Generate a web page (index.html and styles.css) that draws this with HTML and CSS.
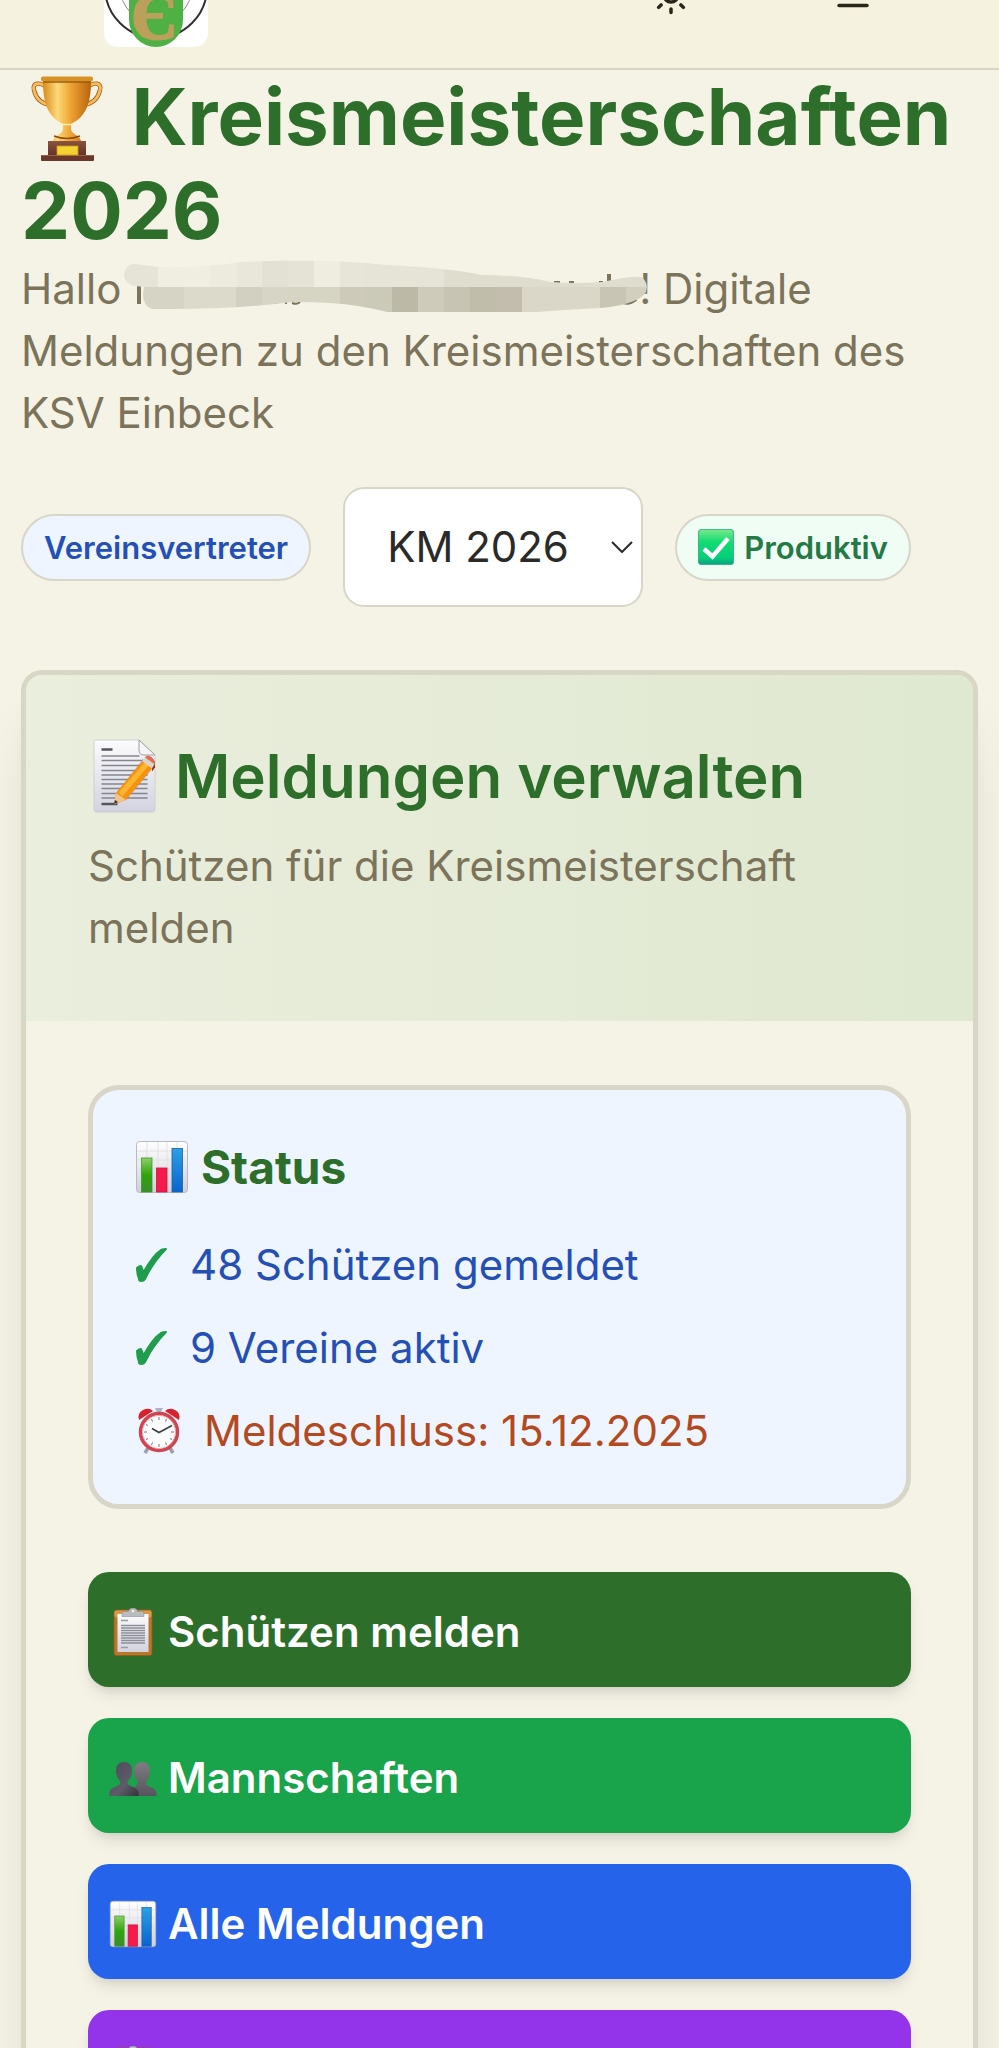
FILE: index.html
```html
<!DOCTYPE html>
<html lang="de">
<head>
<meta charset="utf-8">
<meta name="viewport" content="width=device-width, initial-scale=1">
<title>Kreismeisterschaften 2026</title>
<link rel="stylesheet" href="styles.css">
</head>
<body>
<svg class="defs" aria-hidden="true">
  <defs>
    <linearGradient id="gold" x1="0" x2="1" y1="0" y2="0">
      <stop offset="0" stop-color="#d98a1c"/><stop offset=".3" stop-color="#fdd978"/><stop offset=".55" stop-color="#f0a838"/><stop offset="1" stop-color="#b9620a"/>
    </linearGradient>
    <linearGradient id="wood" x1="0" x2="0" y1="0" y2="1">
      <stop offset="0" stop-color="#8a5440"/><stop offset="1" stop-color="#5f2f22"/>
    </linearGradient>
    <linearGradient id="paper" x1="0" x2="0" y1="0" y2="1">
      <stop offset="0" stop-color="#fbfbfc"/><stop offset="1" stop-color="#d3d3e0"/>
    </linearGradient>
    <linearGradient id="panel" x1="0" x2="0" y1="0" y2="1">
      <stop offset="0" stop-color="#ffffff"/><stop offset="1" stop-color="#cfcfda"/>
    </linearGradient>
    <linearGradient id="bar-green" x1="0" x2="0" y1="0" y2="1">
      <stop offset="0" stop-color="#8fce6a"/><stop offset=".5" stop-color="#2fa50c"/><stop offset="1" stop-color="#3a8c2c"/>
    </linearGradient>
    <linearGradient id="bar-blue" x1="0" x2="0" y1="0" y2="1">
      <stop offset="0" stop-color="#2ba0e6"/><stop offset="1" stop-color="#0a63cf"/>
    </linearGradient>
    <linearGradient id="tick-green" x1="0" x2="0" y1="0" y2="1">
      <stop offset="0" stop-color="#7be88c"/><stop offset=".35" stop-color="#12dc72"/><stop offset=".8" stop-color="#05cf78"/><stop offset="1" stop-color="#0ba183"/>
    </linearGradient>
    <linearGradient id="person" x1="0" x2="1" y1="0" y2="1">
      <stop offset="0" stop-color="#4b4a56"/><stop offset=".6" stop-color="#5c5b68"/><stop offset="1" stop-color="#34333c"/>
    </linearGradient>
    <linearGradient id="person-back" x1="0" x2="0" y1="0" y2="1">
      <stop offset="0" stop-color="#7f7d80"/><stop offset="1" stop-color="#55545c"/>
    </linearGradient>
    <symbol id="chart" viewBox="0 0 54 54">
      <rect x="1.5" y="1.5" width="51" height="51" rx="3" fill="url(#panel)" stroke="#b9b9c2"/>
      <path d="M2 11h50M2 20h50M2 29h50M12 2v50M23 2v50M32 2v50M42 2v50" stroke="#dcdce2" stroke-width=".7"/>
      <rect x="6.5" y="18" width="10.5" height="34" fill="url(#bar-green)" stroke="#3c9a27" stroke-width=".8"/>
      <rect x="21.500" y="28" width="10.500" height="24" fill="#f5194c" stroke="#c4163c" stroke-width=".8"/>
      <rect x="37" y="8.500" width="10.500" height="43.500" fill="url(#bar-blue)" stroke="#1a5fa8" stroke-width=".8"/>
    </symbol>
    <symbol id="clipboard" viewBox="0 0 48 48">
      <rect x="5" y="2" width="38" height="45.500" rx="2.500" fill="#b8782c" stroke="#94591a" stroke-width=".8"/>
      <rect x="5.500" y="2.500" width="37" height="7" rx="2" fill="#d79a48"/>
      <rect x="8.500" y="6" width="31" height="38" fill="url(#paper)"/>
      <path d="M12 12.500h7M12 39.500h7" stroke="#9a9aa4" stroke-width="1.500"/>
      <path d="M12 17.500h24M12 20h24M12 22.500h24M12 25h24M12 27.500h24M12 30h24M12 32.500h24M12 35h24" stroke="#8f8f9a" stroke-width="1.400"/>
      <path d="M13 8.500V5.500q0-2 2-2h4.500q.5-3.500 4.500-3.500t4.500 3.500H33q2 0 2 2v3z" fill="#b9bcc0" stroke="#8b8e92" stroke-width=".6"/>
      <circle cx="24" cy="3" r="1.300" fill="#f2efe2"/>
    </symbol>
  </defs>
</svg>

<header class="topbar">
  <a class="brand" href="#" aria-label="Startseite">
    <svg class="logo" viewBox="0 0 104 104">
      <rect width="104" height="104" rx="14" fill="#fff"/>
      <circle cx="52" cy="44" r="51" fill="none" stroke="#303030" stroke-width="2"/>
      <circle cx="52" cy="44" r="36" fill="none" stroke="#8a8a8a" stroke-width="1"/>
      <path d="M25 10h54v67a27 27 0 0 1-54 0z" fill="#4fb043"/>
      <text class="logo-letter" x="50" y="96" text-anchor="middle">Є</text>
    </svg>
  </a>
  <div class="tools">
    <button class="tool" type="button" aria-label="Farbschema">
      <svg class="tool-icon" viewBox="0 0 24 24"><circle cx="12" cy="12" r="4"/><path d="M12 2v2M12 20v2M4.930 4.930l1.410 1.410M17.660 17.660l1.410 1.410M2 12h2M20 12h2M6.340 17.660l-1.410 1.410M19.070 4.930l-1.410 1.410"/></svg>
    </button>
    <button class="tool" type="button" aria-label="Menü">
      <svg class="tool-icon" viewBox="0 0 24 24"><path d="M4 6h16M4 12h16M4 18h16"/></svg>
    </button>
  </div>
</header>

<main class="page">
  <h1 class="title"><svg class="title-icon" viewBox="-2 0 92 88" aria-hidden="true">
      <path d="M25 13C16 6 9 8 11 15c2 9 8 14 17 15M63 13c9-7 16-5 14 2-2 9-8 14-17 15" fill="none" stroke="#a8651a" stroke-width="4.500"/>
      <path d="M25 13C16 6 9 8 11 15c2 9 8 14 17 15M63 13c9-7 16-5 14 2-2 9-8 14-17 15" fill="none" stroke="#f4bd62" stroke-width="2.800"/>
      <path d="M20 6c0 22 5 36 20 43v5c0 5-9 6-10 12h28c-1-6-10-7-10-12v-5c15-7 20-21 20-43z" fill="url(#gold)"/>
      <rect x="18" y="1.500" width="52" height="5" rx="2" fill="#d99324"/>
      <path d="M20 7h48" stroke="#9b5c10" stroke-width="1.500"/>
      <path d="M38 49.500h12" stroke="#fff0b8" stroke-width="1.500"/>
      <path d="M31 61q13 5 26 0" fill="none" stroke="#8d4c0e" stroke-width="1.500"/>
      <rect x="25" y="66" width="38" height="16" fill="url(#wood)"/>
      <rect x="18" y="80" width="53" height="6" rx="1" fill="#6b3728"/>
      <path d="M18 80.500h53" stroke="#97604b"/>
      <rect x="34" y="71" width="21" height="9" fill="#f5d22f" stroke="#c49a1c" stroke-width=".8"/>
    </svg> Kreismeisterschaften 2026</h1>
  <p class="lead">Hallo <span class="redacted"><svg class="smear" viewBox="131 262 506 62" aria-hidden="true">
      <g fill="none" stroke="#7b735a" stroke-width="4">
        <path d="M137 304V286"/>
        <path d="M264 303h3M272 303h3M284 302v2M290 303q5 2 8-1" stroke-width="2"/>
        <path d="M552 282h6M567 282h5M597 282h4" stroke-width="2"/>
        <path d="M607 274v12"/>
        <path d="M618 300q7 6 16-1"/>
      </g>
      <clipPath id="smear-shape"><path d="M122 276q1-13 12-12l22 3q45 1 84-5 80-4 145 3 62 3 95 10 40 0 68 7 28 2 52 0 28-6 39-5 8 5 5 15-7 12-45 16-40 2-64 4H385q-40-11-95-10-60 8-140 7-9-3-9-15l1-7-9-1q-10-2-11-10z"/></clipPath>
      <g clip-path="url(#smear-shape)">
        <path d="M120 255h36v33h-36z" fill="#e6e4d7"/><path d="M156 255h52v33h-52z" fill="#f0eee1"/>
        <path d="M208 255h27v33h-27z" fill="#edebdd"/><path d="M235 255h25v33h-25z" fill="#e9e7d9"/>
        <path d="M260 255h26v33h-26z" fill="#e3e1d3"/><path d="M286 255h26v33h-26z" fill="#e5e3d6"/>
        <path d="M312 255h26v33h-26z" fill="#efede0"/><path d="M338 255h26v33h-26z" fill="#e7e5d8"/>
        <path d="M364 255h78v33h-78z" fill="#e5e4d6"/><path d="M442 255h78v33h-78z" fill="#dfdece"/>
        <path d="M520 255h130v33h-130z" fill="#dfddcd"/>
        <path d="M138 287h44v28h-44z" fill="#d6d4c4"/><path d="M182 287h52v28h-52z" fill="#dcdacb"/>
        <path d="M234 287h26v28h-26z" fill="#d2d0c0"/><path d="M260 287h26v28h-26z" fill="#d7d5c6"/>
        <path d="M286 287h52v28h-52z" fill="#d6d4c3"/><path d="M338 287h26v28h-26z" fill="#cdcab9"/>
        <path d="M364 287h26v28h-26z" fill="#cbc9b8"/><path d="M390 287h26v28h-26z" fill="#bdb9a7"/>
        <path d="M416 287h26v28h-26z" fill="#cecbbb"/><path d="M442 287h26v28h-26z" fill="#c7c4b3"/>
        <path d="M468 287h26v28h-26z" fill="#c1bdab"/><path d="M494 287h26v28h-26z" fill="#c3bdad"/>
        <path d="M520 287h78v28h-78z" fill="#dad7c8"/><path d="M598 287h26v28h-26z" fill="#c9c5b4"/>
        <path d="M624 287h26v28h-26z" fill="#d2cfbf"/>
      </g>
    </svg></span>! Digitale Meldungen zu den Kreismeisterschaften des KSV Einbeck</p>

  <div class="filters">
    <span class="badge badge-role">Vereinsvertreter</span>
    <span class="picker">
      <select class="picker-select" aria-label="Wettbewerb"><option>KM 2026</option></select>
      <svg class="picker-arrow" viewBox="0 0 22 12" aria-hidden="true"><path d="M1 1l10 10L21 1"/></svg>
    </span>
    <span class="badge badge-live"><svg class="badge-icon" viewBox="0 0 36 36" aria-hidden="true">
      <rect x=".5" y=".5" width="35" height="35" rx="2.500" fill="url(#tick-green)" stroke="#28a884" stroke-width=".8"/>
      <path d="M6 20l8.500 7.500L30 9.500" fill="none" stroke="#fff" stroke-width="4.500"/>
    </svg>Produktiv</span>
  </div>

  <section class="card">
    <div class="card-head">
      <h2 class="card-title"><svg class="card-icon" viewBox="0 0 70 74" aria-hidden="true">
        <path d="M8 1h43l16 15v55q0 2-2 2H8q-2 0-2-2V3q0-2 2-2z" fill="url(#paper)" stroke="#c9c9d4" stroke-width=".8"/>
        <path d="M51 1v10q0 5 5 5h11z" fill="#f5f5f7" stroke="#9c9ca6"/>
        <path d="M13.500 10.500h11M13.500 65h16" stroke="#55555c" stroke-width="2.500"/>
        <path d="M13.500 17h38M13.500 21.500h46M13.500 26.500h46M13.500 31.500h46M13.500 36h46M13.500 40.500h46M13.500 45h46M13.500 49.500h46M13.500 54.500h46M13.500 59h46" stroke="#85858f" stroke-width="1.400"/>
        <path d="M26 66l3-13L55 20l11 8-27 32z" fill="#8b6a45" opacity=".35"/>
        <path d="M26 65l2-11 28-34 10 7-28 34z" fill="#f5920f"/>
        <path d="M31 53l27-31 4 3-28 33z" fill="#ffb52e"/>
        <path d="M26 65l2-11 10 7z" fill="#f0c48c"/><path d="M26 65l1-4 3 2z" fill="#333"/>
        <path d="M54 22l3-3.500 10 7-3 4z" fill="#d9d3cd"/>
        <path d="M57 18.500l2-2q5 0 8 6v3z" fill="#e46b50"/>
        <path d="M64 29.500l3-5v4l-3 4z" fill="#9e2b1d"/>
      </svg>Meldungen verwalten</h2>
      <p class="card-text">Schützen für die Kreismeisterschaft melden</p>
    </div>
    <div class="card-body">
      <section class="status">
        <h3 class="status-title"><svg class="status-icon" aria-hidden="true"><use href="#chart"/></svg>Status</h3>
        <ul class="status-list">
          <li class="status-item"><svg class="tick" viewBox="0 0 34 36" aria-hidden="true"><path d="M2 21q2-2 4-2 2 4 2 7Q18 8 26 3q2-1 5-1Q18 15 10 32q-1 2-4 2-2 0-2-2Q2 27 2 21z"/></svg>48 Schützen gemeldet</li>
          <li class="status-item"><svg class="tick" viewBox="0 0 34 36" aria-hidden="true"><path d="M2 21q2-2 4-2 2 4 2 7Q18 8 26 3q2-1 5-1Q18 15 10 32q-1 2-4 2-2 0-2-2Q2 27 2 21z"/></svg>9 Vereine aktiv</li>
          <li class="status-item status-due"><svg class="clock" viewBox="0 0 48 48" aria-hidden="true">
            <path d="M13 41l-3 5M35 41l3 5" stroke="#9ba0a8" stroke-width="3.500"/>
            <path d="M20 1h8l-2 4h-4z" fill="#aeb4bb"/>
            <path d="M4 13Q2 6 8 3q6-3 10 1z" fill="#d6232f"/><path d="M44 13q2-7-4-10-6-3-10 1z" fill="#d6232f"/>
            <circle cx="24" cy="25" r="18.500" fill="#fcfcfe" stroke="#cf4450" stroke-width="3.500"/>
            <circle cx="24" cy="25" r="16.500" fill="none" stroke="#e9a7a9"/>
            <path d="M24 10v3M24 37v3M9 25h3M36 25h3M16.500 12l1 2.500M31.500 12l-1 2.500M16.500 38l1-2.500M31.500 38l-1-2.500M11 17.500l2 1M37 32.500l-2-1M11 32.500l2-1" stroke="#77777f"/>
            <path d="M17 21.500l7 4 13-7" fill="none" stroke="#3c3f44" stroke-width="1.600"/>
          </svg>Meldeschluss: 15.12.2025</li>
        </ul>
      </section>
      <nav class="actions" aria-label="Meldungen">
        <button class="action action-dark" type="button"><svg class="action-icon" aria-hidden="true"><use href="#clipboard"/></svg>Schützen melden</button>
        <button class="action action-green" type="button"><svg class="action-icon" viewBox="0 0 48 48" aria-hidden="true">
          <path d="M24 42V35q4-3 5-7-4-4-4-11 0-9 8-9t8 9q0 7-4 11 0 3 2 4 8 2 8.500 7v3z" fill="url(#person-back)"/>
          <path d="M.5 42v-3q0-5 9-7.500 2-1 2-4-4.500-4-4.500-11Q7 8 15 8t8 8.500q0 7-4.500 11 0 3 2 4 9 2.500 9 7.500v3z" fill="url(#person)"/>
        </svg>Mannschaften</button>
        <button class="action action-blue" type="button"><svg class="action-icon" aria-hidden="true"><use href="#chart"/></svg>Alle Meldungen</button>
        <button class="action action-purple" type="button" aria-label="Weitere Aktion"><svg class="action-icon" aria-hidden="true"><use href="#clipboard"/></svg></button>
      </nav>
    </div>
  </section>
</main>
</body>
</html>
```
FILE: styles.css
```css
* {
  box-sizing: border-box;
}

body {
  margin: 0;
  height: 100vh;
  overflow: hidden;
  background: #f5f3e6;
  color: #7b735a;
  font-family: Inter, "Liberation Sans", sans-serif;
  font-size: 42px;
  font-weight: 440;
  line-height: 62px;
}

h1, h2, h3, p, ul {
  margin: 0;
  padding: 0;
}

svg {
  display: block;
  flex: none;
}

.defs {
  position: absolute;
  width: 0;
  height: 0;
}

/* The bar is scrolled partly out of view. */
.topbar {
  display: flex;
  align-items: center;
  justify-content: space-between;
  margin-top: -80px;
  padding: 23px 104px 21px;
  border-bottom: 2px solid #d8d6c4;
  background: #f5f3df;
}

.logo {
  width: 104px;
  height: 104px;
}

.logo-letter {
  font-family: "Liberation Serif", serif;
  font-size: 68px;
  font-weight: 700;
  fill: #bba05c;
  stroke: #bba05c;
  stroke-width: 2px;
}

.tools {
  display: flex;
  gap: 98px;
}

.tool {
  padding: 21px;
  border: 0;
  background: none;
}

.tool-icon {
  width: 42px;
  height: 42px;
  fill: none;
  stroke: #2b2619;
  stroke-width: 2;
  stroke-linecap: round;
  stroke-linejoin: round;
}

.page {
  padding: 0 21px;
}

.title {
  color: #2d6e2b;
  font-size: 78px;
  font-weight: 700;
  line-height: 94px;
}

.title-icon {
  display: inline-block;
  width: 92px;
  height: 88px;
  vertical-align: -18px;
}

.redacted {
  position: relative;
  display: inline-block;
  width: 506px;
}

.smear {
  position: absolute;
  left: 0;
  bottom: -20px;
  width: 506px;
  height: 62px;
  overflow: visible;
}

.filters {
  display: flex;
  align-items: center;
  gap: 32px;
  margin: 43px 0 63px;
}

.badge {
  display: flex;
  align-items: center;
  gap: 10px;
  padding: 10px 21px;
  border: 2px solid #d8d6c8;
  border-radius: 34px;
  font-size: 31px;
  font-weight: 600;
  line-height: 43px;
}

.badge-role {
  background: #eff5ff;
  color: #2450b5;
}

.badge-live {
  background: #f0fdf5;
  color: #237a45;
}

.badge-icon {
  width: 36px;
  height: 36px;
}

.picker {
  position: relative;
}

.picker-select {
  display: block;
  width: 300px;
  height: 120px;
  padding: 0 42px;
  border: 2px solid #d8d6c8;
  border-radius: 21px;
  background: #fff;
  color: #2a2a28;
  font: inherit;
  appearance: none;
}

.picker-arrow {
  position: absolute;
  top: 54px;
  right: 10px;
  width: 22px;
  height: 12px;
  fill: none;
  stroke: #2a2a28;
  stroke-width: 2;
  pointer-events: none;
}

.card {
  overflow: hidden;
  border: 5px solid #d8d6c4;
  border-radius: 21px;
  background: #f5f3e6;
  box-shadow: 0 52px 65px -13px rgba(0, 0, 0, 0.1), 0 21px 26px -16px rgba(0, 0, 0, 0.1);
}

.card-head {
  padding: 62px;
  background: linear-gradient(to right, #eaeedd, #dfe8d0);
}

.card-title {
  display: flex;
  align-items: center;
  gap: 17px;
  margin-bottom: 20px;
  color: #2d6e2b;
  font-size: 60px;
  font-weight: 600;
  line-height: 78px;
}

.card-icon {
  width: 70px;
  height: 74px;
}

.card-body {
  padding: 64px 62px;
}

.status {
  padding: 42px;
  border: 5px solid #d8d6c8;
  border-radius: 31px;
  background: #eff5ff;
}

.status-title {
  display: flex;
  align-items: center;
  gap: 12px;
  margin-bottom: 32px;
  color: #2d6e2b;
  font-size: 46px;
  font-weight: 700;
  line-height: 70px;
}

.status-icon {
  width: 54px;
  height: 54px;
}

.status-list {
  display: flex;
  flex-direction: column;
  gap: 21px;
  list-style: none;
}

.status-item {
  display: flex;
  align-items: center;
  gap: 21px;
  color: #2450b5;
}

.status-due {
  color: #b34a1f;
}

.tick {
  width: 34px;
  height: 36px;
  fill: #1f9d4d;
  stroke: #1f9d4d;
  stroke-width: 2;
  stroke-linejoin: round;
}

.clock {
  width: 48px;
  height: 48px;
}

.actions {
  display: flex;
  flex-direction: column;
  gap: 31px;
  margin-top: 63px;
}

.action {
  display: flex;
  align-items: center;
  gap: 11px;
  min-height: 115px;
  padding: 4px 21px 0;
  border: 0;
  border-radius: 21px;
  box-shadow: 0 10px 16px -3px rgba(0, 0, 0, 0.1), 0 5px 10px -5px rgba(0, 0, 0, 0.1);
  color: #fff;
  font: inherit;
  font-weight: 600;
}

.action-icon {
  width: 48px;
  height: 48px;
}

.action-dark {
  background: #2d6e2b;
}

.action-green {
  background: #19a34a;
}

.action-blue {
  background: #2563eb;
}

.action-purple {
  background: #9333ea;
}
```
